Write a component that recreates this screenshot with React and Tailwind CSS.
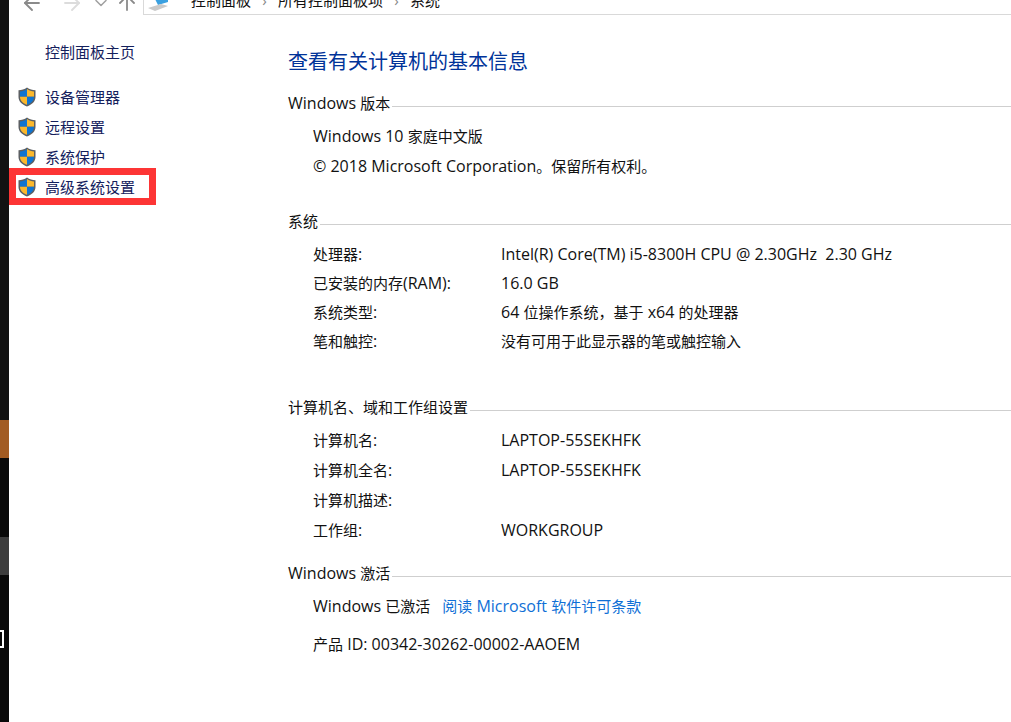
import React from "react";
import { ArrowLeft, ArrowRight, ChevronDown, ArrowUp } from "lucide-react";

const font = "font-['Open_Sans','Noto_Sans_CJK_SC',sans-serif]";

// latin runs sit a pixel larger than the CJK ones, as Segoe UI does next to YaHei
const Mixed = ({ text = "" }) =>
    text.split(/([\x20-\x7e©]+)/).map((part, i) =>
        /[\x20-\x7e©]/.test(part) ? (
            <span key={i} className="text-[16px] leading-none">{part}</span>
        ) : (
            part
        )
    );

const Shield = () => (
    <svg width="20" height="20" viewBox="0 0 20 20" className="shrink-0">
        <path d="M10 0.5 C7.5 2.5 4.5 3.2 1.5 3.2 V10 C1.5 14.5 5 17.5 10 19.5 C15 17.5 18.5 14.5 18.5 10 V3.2 C15.5 3.2 12.5 2.5 10 0.5 Z" fill="#5c5f63" />
        <path d="M10 2 C8 3.5 5.5 4.3 3 4.4 V9.8 H10 Z" fill="#0f74d1" />
        <path d="M10 2 C12 3.5 14.5 4.3 17 4.4 V9.8 H10 Z" fill="#fbb82c" />
        <path d="M3 9.8 H10 V17.8 C6 16.2 3 13.8 3 10 Z" fill="#fbb82c" />
        <path d="M17 9.8 H10 V17.8 C14 16.2 17 13.8 17 10 Z" fill="#0f74d1" />
    </svg>
);

const SideLink = ({ label, boxed }) => (
    <div className="relative h-[30px] flex items-center gap-[8px] pl-[8px]">
        <Shield />
        <span className="text-[15px] text-[#14205c]">{label}</span>
        {boxed && <div className="absolute left-0 top-[-4px] w-[147px] h-[37px] border-[7px] border-[#fd3535]" />}
    </div>
);

const SectionTitle = ({ title, className }) => (
    <div className={`flex items-center gap-[2px] h-[20px] text-[15px] text-[#111111] ${className}`}>
        <span className="whitespace-pre"><Mixed text={title} /></span>
        <div className="flex-1 h-px bg-[#cfcfcf] mt-[6px]" />
    </div>
);

const InfoRow = ({ label, value, height = "h-[30px]" }) => (
    <div className={`flex items-center pl-[25px] text-[15px] text-[#111111] ${height}`}>
        <span className="w-[188px] shrink-0 whitespace-pre"><Mixed text={label} /></span>
        <span className="whitespace-pre"><Mixed text={value} /></span>
    </div>
);

export default function App() {
    return (
        <div className={`flex w-[1011px] h-[722px] overflow-hidden bg-white ${font}`}>
            {/* sliver of the desktop behind the window */}
            <div className="w-[9px] shrink-0 bg-[#090909] flex flex-col">
                <div className="h-[420px] bg-[#121212]" />
                <div className="h-[38px] bg-[#a25b22]" />
                <div className="h-[79px]" />
                <div className="h-[38px] bg-[#3d3d3d]" />
                <div className="h-[55px]" />
                <div className="h-[18px] w-[4px] border-2 border-l-0 border-white" />
            </div>

            <div className="flex-1 flex flex-col min-w-0">
                {/* toolbar, cut off by the top of the shot */}
                <div className="h-[15px] flex items-end text-[#8a8a8a] overflow-hidden">
                    <div className="flex items-center pl-[11px] w-[134px] h-[15px] -translate-y-[5px]">
                        <ArrowLeft size={24} strokeWidth={1.8} className="shrink-0" />
                        <ArrowRight size={24} strokeWidth={1.8} className="shrink-0 ml-[16px] text-[#dcdcdc]" />
                        <ChevronDown size={20} strokeWidth={1.8} className="shrink-0 ml-[7px] text-[#a0a0a0]" />
                        <ArrowUp size={24} strokeWidth={1.8} className="shrink-0 ml-[4px]" />
                    </div>
                    <div className="flex-1 h-[15px] border-l border-b border-[#d9d9d9] flex items-center pl-[3px] text-[15px] text-[#111111] overflow-hidden whitespace-nowrap">
                        <svg width="24" height="16" viewBox="0 0 24 16" className="shrink-0 -translate-y-[2px]">
                            <path d="M7 0 H21 V5 L11 8 Z" fill="#3aa0e0" />
                            <path d="M1 11 L14 7 L21 9 L8 14 Z" fill="#c9c9c9" />
                        </svg>
                        <span className="ml-[20px] -translate-y-[7px]">控制面板</span>
                        <span className="w-[27px] text-center -translate-y-[7px] text-[#888]">›</span>
                        <span className="-translate-y-[7px]">所有控制面板项</span>
                        <span className="w-[27px] text-center -translate-y-[7px] text-[#888]">›</span>
                        <span className="-translate-y-[7px]">系统</span>
                    </div>
                </div>

                <div className="flex flex-1">
                    <aside className="w-[279px] shrink-0">
                        <div className="pl-[36px] mt-[26px] h-[22px] flex items-center text-[15px] text-[#14205c]">控制面板主页</div>
                        <div className="mt-[19px]">
                            <SideLink label="设备管理器" />
                            <SideLink label="远程设置" />
                            <SideLink label="系统保护" />
                            <SideLink label="高级系统设置" boxed />
                        </div>
                    </aside>

                    <main className="flex-1 min-w-0">
                        <h1 className="mt-[33px] h-[28px] flex items-center text-[20px] text-[#003399]">查看有关计算机的基本信息</h1>

                        <SectionTitle title="Windows 版本" className="mt-[17px]" />
                        <div className="mt-[8px]">
                            <InfoRow label="Windows 10 家庭中文版" />
                            <InfoRow label="© 2018 Microsoft Corporation。保留所有权利。" />
                        </div>

                        <SectionTitle title="系统" className="mt-[30px]" />
                        <div className="mt-[9px]">
                            <InfoRow label="处理器:" value="Intel(R) Core(TM) i5-8300H CPU @ 2.30GHz  2.30 GHz" height="h-[29px]" />
                            <InfoRow label="已安装的内存(RAM):" value="16.0 GB" height="h-[29px]" />
                            <InfoRow label="系统类型:" value="64 位操作系统，基于 x64 的处理器" height="h-[29px]" />
                            <InfoRow label="笔和触控:" value="没有可用于此显示器的笔或触控输入" height="h-[29px]" />
                        </div>

                        <SectionTitle title="计算机名、域和工作组设置" className="mt-[41px]" />
                        <div className="mt-[8px]">
                            <InfoRow label="计算机名:" value="LAPTOP-55SEKHFK" />
                            <InfoRow label="计算机全名:" value="LAPTOP-55SEKHFK" />
                            <InfoRow label="计算机描述:" value="" />
                            <InfoRow label="工作组:" value="WORKGROUP" />
                        </div>

                        <SectionTitle title="Windows 激活" className="mt-[18px]" />
                        <div className="mt-[8px] pl-[25px] text-[15px] text-[#111111]">
                            <div className="h-[30px] flex items-center gap-[12px] whitespace-pre">
                                <span><Mixed text="Windows 已激活" /></span>
                                <span className="text-[#0f6fd6]"><Mixed text="阅读 Microsoft 软件许可条款" /></span>
                            </div>
                            <div className="mt-[8px] h-[30px] flex items-center whitespace-pre"><span><Mixed text="产品 ID: 00342-30262-00002-AAOEM" /></span></div>
                        </div>
                    </main>
                </div>
            </div>
        </div>
    );
}
